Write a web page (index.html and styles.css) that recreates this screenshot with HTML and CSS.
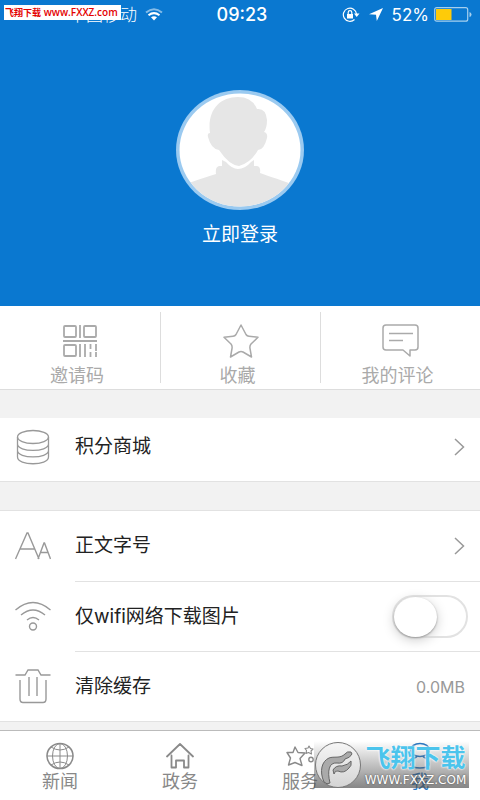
FILE: index.html
```html
<!DOCTYPE html>
<html lang="zh-CN">
<head>
<meta charset="utf-8">
<meta name="viewport" content="width=device-width, initial-scale=1">
<title>我</title>
<link rel="stylesheet" href="styles.css">
</head>
<body>
<div class="app">
  <header class="hero">
    <div class="status">
      <div class="status-left">
        <span class="carrier">中国移动</span>
        <svg width="18" height="13" viewBox="0 0 18 13" fill="none" stroke="#fff" stroke-width="2"><path d="M1 4.500Q9-2 17 4.500" opacity=".5"/><path d="M3.500 7.300Q9 3 14.500 7.300"/><path d="M6 9.300Q9 7 12 9.300L9 12.500Z" fill="#fff" stroke="none"/></svg>
      </div>
      <span class="clock">09:23</span>
      <div class="status-right">
        <svg width="18" height="16" viewBox="0 0 18 16" fill="none" stroke="#fff" stroke-width="1.200"><path d="M12.500 12.500A6.600 6.600 0 1 1 14.500 7"/><path d="M12 6.500h5.500L14.700 10Z" fill="#fff" stroke="none"/><rect x="5" y="7" width="6" height="4.500" fill="#fff" stroke="none"/><path d="M6.200 7V5.500a1.800 1.800 0 0 1 3.600 0V7"/></svg>
        <svg class="arrow" width="14" height="14" viewBox="0 0 14 14"><path d="M14 0 7.800 13 7 6.800 0 6.200Z" fill="#fff"/></svg>
        <span class="percent">52%</span>
        <svg width="38" height="15" viewBox="0 0 38 15"><rect x=".7" y=".7" width="33" height="13.500" rx="2" fill="none" stroke="#a5cfee" stroke-width="1.200"/><rect x="2" y="2" width="15.500" height="11" fill="#fecb09"/><path d="M35.500 5q2 .5 2 2.500t-2 2.500z" fill="#a5cfee"/></svg>
      </div>
    </div>
    <div class="source-tag"><b>飞翔下载</b> <span>www.FXXZ.com</span></div>
    <button class="login">
      <svg class="avatar" width="128" height="120" viewBox="0 0 128 120">
        <defs><clipPath id="face"><ellipse cx="64" cy="60" rx="60.500" ry="56.500"/></clipPath></defs>
        <ellipse cx="64" cy="60" rx="64" ry="60" fill="#9bcaf0"/>
        <ellipse cx="64" cy="60" rx="60.500" ry="56.500" fill="#fff"/>
        <g clip-path="url(#face)" fill="#e6e6e6">
          <path d="M0 98Q8 94 40 84Q39 77 43 76L46 76V70L50 72Q56 79 62 79Q69 79 75 72L78 70V76L81 76Q85 77 84 83Q98 88 128 98V120H0Z"/>
          <path d="M34 43C31 21 43 7 62 7Q76 7 81 19Q90 18 91 30Q91 38 88 42Q92 43 91 48Q88 60 82 60Q75 73 63 76Q53 75 43 60Q35 59 32 47Q31 43 34 43Z"/>
        </g>
      </svg>
      <span>立即登录</span>
    </button>
  </header>

  <nav class="quick">
    <button><svg width="36" height="34" viewBox="0 0 36 34" fill="none" stroke="#aaa" stroke-width="1.800"><rect x="2" y="2" width="12" height="11" rx="1"/><path d="M18 1v13M1 17h34M18 20v13M23 20v13M28.500 20v5m0 3v5M34 20v7m0 1v5"/><rect x="22" y="2" width="12" height="11" rx="1"/><rect x="2" y="21" width="12" height="11" rx="1"/></svg><span>邀请码</span></button>
    <button><svg width="38" height="34" viewBox="0 0 38 34" fill="none" stroke="#aaa" stroke-width="1.500" stroke-linejoin="round"><path d="M19 1 24 10.500Q25 12 27 12.200L36 13.300 29 20Q27.500 22 28 24.500L29.500 33 21 28Q19 27 17 28L8.500 33 10 24.500Q10.500 22 9 20L2 13.300 11 12.200Q13 12 14 10.500Z"/></svg><span>收藏</span></button>
    <button><svg width="38" height="34" viewBox="0 0 38 34" fill="none" stroke="#aaa" stroke-width="1.500" stroke-linejoin="round"><path d="M4 1H33Q36 1 36 4V23Q36 26 33 26H28V32L21 26H4Q1 26 1 23V4Q1 1 4 1ZM7 9.500H31M7 16.500H21"/></svg><span>我的评论</span></button>
  </nav>

  <main>
    <section class="group first">
      <button class="row short">
        <svg class="icon" width="36" height="36" viewBox="0 0 36 36" fill="none" stroke="#999" stroke-width="1.300"><ellipse cx="18" cy="8" rx="15.500" ry="6.500"/><path d="M2.500 8V28C2.500 37 33.500 37 33.500 28V8M2.500 15C2.500 23.500 33.500 23.500 33.500 15M2.500 21.500C2.500 30 33.500 30 33.500 21.500"/></svg>
        <span class="body"><span>积分商城</span><svg class="chevron" width="11" height="18" viewBox="0 0 11 18"><path d="M1 1 9.500 9 1 17"/></svg></span>
      </button>
    </section>
    <section class="group">
      <button class="row">
        <svg class="icon" width="36" height="36" viewBox="0 0 36 36" fill="none" stroke="#999" stroke-width="1.400"><path d="M.5 31 12 5H13L24 31M5 21H20M23 31 29 15H29.500L35.500 31M25.500 24.500H33"/></svg>
        <span class="body"><span>正文字号</span><svg class="chevron" width="11" height="18" viewBox="0 0 11 18"><path d="M1 1 9.500 9 1 17"/></svg></span>
      </button>
      <label class="row">
        <svg class="icon" width="36" height="36" viewBox="0 0 36 36" fill="none" stroke="#999" stroke-width="1.400"><path d="M.5 12Q18-3 35.500 12M6 17Q18 7 30 17M12 22Q18 17 24 22"/><circle cx="18" cy="28.500" r="3.500"/></svg>
        <span class="body"><span>仅wifi网络下载图片</span><input class="toggle" type="checkbox" role="switch"></span>
      </label>
      <button class="row">
        <svg class="icon" width="36" height="36" viewBox="0 0 36 36" fill="none" stroke="#999" stroke-width="1.400"><path d="M.5 7H10L13 2H23L26 7H35.500M5 12V31Q5 34.500 8 34.500H28Q31 34.500 31 31V12M14 9V28M22 9V28"/></svg>
        <span class="body"><span>清除缓存</span><span class="value">0.0MB</span></span>
      </button>
    </section>
  </main>

  <footer class="tabbar">
    <button><svg width="30" height="28" viewBox="0 0 30 28" fill="none" stroke="#8a8a8a" stroke-width="1"><ellipse cx="15" cy="14" rx="13" ry="12.500" stroke-width="1.600"/><ellipse cx="15" cy="14" rx="7.500" ry="12.500"/><path d="M15 1.500V26.500M2 14H28M6 5Q15 11 24 5M6 23Q15 17 24 23"/></svg><span>新闻</span></button>
    <button><svg width="30" height="28" viewBox="0 0 30 28" fill="none" stroke="#8a8a8a" stroke-width="1.800" stroke-linejoin="round" stroke-linecap="round"><path d="M2 14.500 15 2 28 14.500M6.500 13.500V25.500H11V18.500H19V25.500H23.500V13.500"/></svg><span>政务</span></button>
    <button><svg width="30" height="28" viewBox="0 0 30 28" fill="none" stroke="#8a8a8a" stroke-width="1.400" stroke-linejoin="round"><path d="M10 5 13 10.500 20 11 15 16.500 17 23.500 10 20.500 3.500 23 5.500 16 2 10.500 8 10.500Z"/><path d="M24 4 25.500 6.500 28 7 26 9 26.500 12 23.500 10.500 21 11.500 21.500 8.500 20 6.500 23 6Z" stroke-width="1.100"/><circle cx="26" cy="17.500" r="2.200"/></svg><span>服务</span></button>
    <button class="active"><svg width="30" height="28" viewBox="0 0 30 28" fill="none" stroke="#2a79c4" stroke-width="1.600"><ellipse cx="15" cy="8" rx="9.500" ry="6.500"/><path d="M12 14.500Q5 18 6 23Q7 26 15 26T24 23Q25 18 18 14.500"/></svg><span>我</span></button>
    <div class="watermark">
      <svg width="48" height="46" viewBox="0 0 48 46"><defs><linearGradient id="disc" x2="0" y2="1"><stop stop-color="#f6f6f6"/><stop offset="1" stop-color="#d4d4d4"/></linearGradient></defs><circle cx="24" cy="23" r="22.500" fill="url(#disc)" stroke="#777"/><path d="M10 40C5 29 8 19 15 16C20 14 26 17 31 12Q33 9 37 10L38 12Q36 16 31 17Q29 22 23 21C15 20 13 29 16 41Q13 43 10 40Z" fill="#aaa" stroke="#666"/><path d="M19 28Q22 23 28 24Q34 23 37 19Q38 24 35 26Q30 32 24 29Q21 28 20 32Z" fill="#aaa" stroke="#666"/></svg>
      <div class="mark-text"><b>飞翔下载</b><span>WWW.FXXZ.COM</span></div>
    </div>
  </footer>
</div>
</body>
</html>
```
FILE: styles.css
```css
* { box-sizing: border-box; }
body {
  margin: 0;
  background: #f2f2f2;
  color: #222;
  font-family: Inter, "Noto Sans CJK SC", sans-serif;
}
button {
  border: 0;
  padding: 0;
  background: none;
  color: inherit;
  font: inherit;
  cursor: pointer;
}
svg { display: block; flex: none; }
.app { min-height: 100vh; display: flex; flex-direction: column; }

.hero {
  position: relative;
  background: #0a78d0;
  color: #fff;
  padding-bottom: 55px;
}
.status {
  display: grid;
  grid-template-columns: 1fr auto 1fr;
  align-items: center;
  height: 29px;
  padding: 0 8px;
  font-size: 17px;
  line-height: 20px;
}
.status-left { display: flex; align-items: center; gap: 8px; padding-left: 61px; }
.carrier { font-weight: 300; }
.clock { padding-left: 4px; font-weight: 500; font-size: 18px; }
.status-right { display: flex; align-items: center; justify-content: flex-end; gap: 5px; }
.arrow { margin: 0 4px; }
.source-tag {
  position: absolute;
  left: 4px;
  top: 5px;
  padding: 0 3px 0 1px;
  background: #fff;
  color: #e40000;
  font: 600 10px/14px "Open Sans", sans-serif;
  white-space: nowrap;
}
.source-tag b { font: 700 9px/14px "Noto Sans CJK SC", sans-serif; }
.login {
  display: flex;
  flex-direction: column;
  align-items: center;
  gap: 9px;
  margin: 61px auto 0;
  font-size: 19px;
  line-height: 32px;
}

.quick {
  display: grid;
  grid-template-columns: repeat(3, 1fr);
  padding: 6px 0;
  background: #fff;
  border-bottom: 1px solid #ddd;
}
.quick button {
  display: flex;
  flex-direction: column;
  align-items: center;
  gap: 6px;
  height: 71px;
  padding-top: 12px;
  color: #aaa;
  font-size: 18px;
  line-height: 24px;
}
.quick button + button { border-left: 1px solid #ddd; }
.quick span { margin-right: 6px; }

main { flex: 1; }
.group { margin-top: 28px; background: #fff; border: solid #e2e2e2; border-width: 1px 0; }
.group.first { border-top: 0; }
.row {
  display: flex;
  align-items: center;
  width: 100%;
  height: 70px;
  padding-left: 15px;
  text-align: left;
  font-size: 19px;
  line-height: 28px;
  cursor: pointer;
}
.row.short { height: 63px; padding-bottom: 6px; }
.icon { margin-right: 24px; }
.body {
  display: flex;
  flex: 1;
  align-items: center;
  justify-content: space-between;
  align-self: stretch;
  padding-right: 15px;
}
.row + .row .body { border-top: 1px solid #e2e2e2; }
.chevron { fill: none; stroke: #999; stroke-width: 1.5; }
.value { color: #999; font-size: 16px; line-height: 20px; }
.toggle {
  position: relative;
  appearance: none;
  width: 76px;
  height: 43px;
  margin: 0 -3px 0 0;
  border: 2px solid #e2e2e2;
  border-radius: 22px;
  background: #fff;
}
.toggle::before {
  content: "";
  position: absolute;
  left: 0;
  top: 0;
  width: 43px;
  height: 40px;
  border-radius: 50%;
  background: #fff;
  box-shadow: 0 1px 2px #999, 0 3px 12px #ccc;
}
.toggle:checked { background: #0a78d0; }
.toggle:checked::before { left: 29px; }

.tabbar {
  position: relative;
  display: grid;
  grid-template-columns: repeat(4, 1fr);
  height: 70px;
  padding-top: 11px;
  background: #fff;
  border-top: 1px solid #bbb;
  color: #888;
}
.tabbar button {
  display: flex;
  flex-direction: column;
  align-items: center;
  gap: 1px;
  font-size: 18px;
  line-height: 22px;
}
.tabbar .active { color: #2a79c4; }
.watermark {
  position: absolute;
  right: 11px;
  bottom: 12px;
  display: flex;
  align-items: center;
  width: 155px;
  height: 47px;
  background: linear-gradient(#c0c0c000, #505050b0);
  pointer-events: none;
}
.mark-text { display: flex; flex-direction: column; align-items: center; flex: 1; }
.mark-text b {
  color: #4cc4ec;
  font-size: 25px;
  font-weight: 700;
  line-height: 30px;
  text-shadow: 0 0 2px #fff, 0 0 2px #fff;
}
.mark-text span {
  color: #fff;
  font: 12px/14px "DejaVu Sans", sans-serif;
  text-shadow: 0 0 2px #444;
}
```
